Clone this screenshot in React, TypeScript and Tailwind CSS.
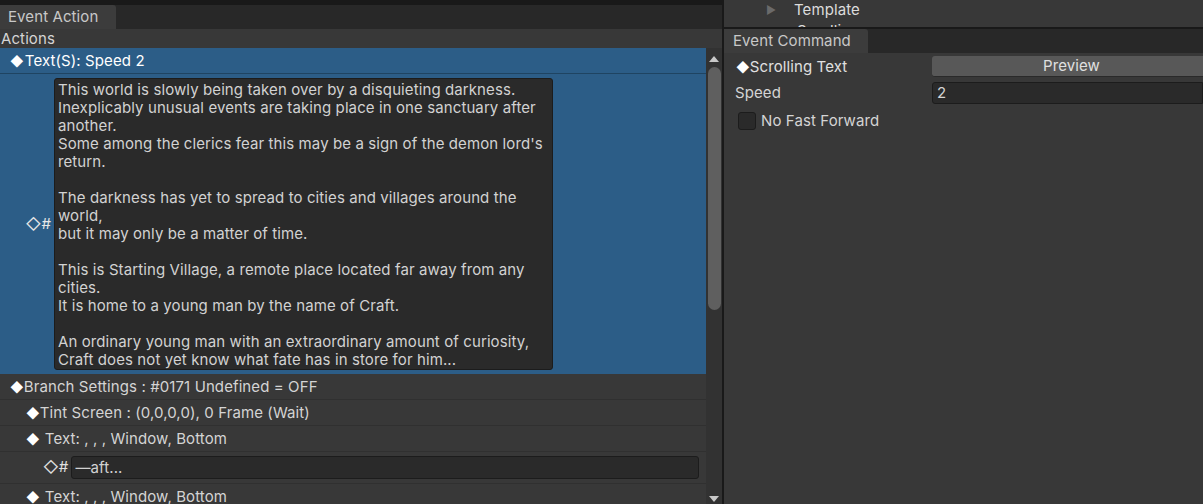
import React from "react";

const storyLines = [
  "This world is slowly being taken over by a disquieting darkness.",
  "Inexplicably unusual events are taking place in one sanctuary after",
  "another.",
  "Some among the clerics fear this may be a sign of the demon lord's",
  "return.",
  "",
  "The darkness has yet to spread to cities and villages around the",
  "world,",
  "but it may only be a matter of time.",
  "",
  "This is Starting Village, a remote place located far away from any",
  "cities.",
  "It is home to a young man by the name of Craft.",
  "",
  "An ordinary young man with an extraordinary amount of curiosity,",
  "Craft does not yet know what fate has in store for him...",
];

const font = { fontFamily: "Inter, 'DejaVu Sans', sans-serif" };

function Row({ children, className }: { children: React.ReactNode; className: string }) {
  return (
    <div className={`flex border-b border-[#303030] bg-[#383838] text-[#d4d4d4] ${className}`}>
      {children}
    </div>
  );
}

export default function App() {
  return (
    <div className="w-[1203px] h-[504px] flex bg-[#191919] overflow-hidden text-[15px] leading-[18px] tracking-[0.1px]" style={font}>
      {/* Left panel */}
      <div className="w-[722px] h-full flex flex-col">
        <div className="h-[5px] bg-[#191919]" />
        <div className="h-[24px] flex bg-[#282828]">
          <div className="w-[116px] bg-[#3c3c3c] rounded-tr-[3px] text-[#c8c8c8] pl-[8px] flex items-center">Event Action</div>
        </div>
        <div className="h-[19px] bg-[#383838] text-[#d4d4d4] flex items-center pl-[1px]">Actions</div>
        <div className="flex flex-1 min-h-0">
          <div className="w-[706px] flex flex-col">
            <div className="h-[26px] shrink-0 bg-[#2c5d87] border-b border-[#1f4462] text-white flex items-center pl-[10px]">
              <span className="text-[13px] mr-[1px]">◆</span>Text(S): Speed 2
            </div>
            <div className="h-[300px] shrink-0 bg-[#2c5d87] flex items-center">
              <div className="w-[54px] text-[#e6e6e6] flex justify-end pr-[3px]">
                <span>◇#</span>
              </div>
              <div className="w-[499px] h-[292px] bg-[#2a2a2a] border border-[#1c1c1c] rounded-[3px] px-[3px] pt-[2px] text-[#d2d2d2] whitespace-pre overflow-hidden">
                {storyLines.map((l, i) => (
                  <div key={i} className="h-[18px]">{l}</div>
                ))}
              </div>
            </div>
            <Row className="h-[26px] shrink-0 items-center pl-[10px]">
              <span className="text-[13px] text-white">◆</span>Branch Settings : #0171 Undefined = OFF
            </Row>
            <Row className="h-[26px] shrink-0 items-center pl-[26px]">
              <span className="text-[13px] text-white">◆</span>Tint Screen : (0,0,0,0), 0 Frame (Wait)
            </Row>
            <Row className="h-[26px] shrink-0 items-center pl-[26px]">
              <span className="text-[13px] text-white mr-[5px]">◆</span>Text: , , , Window, Bottom
            </Row>
            <Row className="h-[32px] shrink-0 items-start pt-[4px] pl-[43px]">
              <span className="text-[#e0e0e0] mr-[3px] mt-[2px]">◇#</span>
              <div className="w-[628px] h-[23px] bg-[#2a2a2a] border border-[#1c1c1c] rounded-[3px] flex items-center px-[3px] text-[#d2d2d2]">—aft...</div>
            </Row>
            <Row className="h-[26px] shrink-0 items-center pl-[26px]">
              <span className="text-[13px] text-white mr-[5px]">◆</span>Text: , , , Window, Bottom
            </Row>
          </div>
          {/* Scrollbar */}
          <div className="w-[16px] bg-[#323232] flex flex-col items-center">
            <div className="mt-[8px] w-0 h-0 border-l-[5px] border-r-[5px] border-b-[6px] border-l-transparent border-r-transparent border-b-[#c8c8c8]" />
            <div className="mt-[5px] w-[13px] h-[243px] bg-[#5f5f5f] rounded-[7px] ml-[1px]" />
            <div className="flex-1" />
            <div className="mb-[2px] w-0 h-0 border-l-[5px] border-r-[5px] border-t-[6px] border-l-transparent border-r-transparent border-t-[#c8c8c8]" />
          </div>
        </div>
      </div>
      {/* Divider */}
      <div className="w-[2px] bg-[#191919]" />
      {/* Right panel */}
      <div className="flex-1 flex flex-col">
        <div className="h-[27px] bg-[#383838] overflow-hidden">
          <div className="h-[20px] flex items-center pl-[42px] text-[#dcdcdc]">
            <span className="text-[#6a6a6a] text-[11px] w-[28px]">▶</span>Template
          </div>
          <div className="h-[22px] flex items-center pl-[73px] text-[#dcdcdc]">Scrolling</div>
        </div>
        <div className="h-[2px] bg-[#191919]" />
        <div className="h-[24px] flex bg-[#282828]">
          <div className="w-[144px] bg-[#3c3c3c] rounded-tr-[3px] text-[#c8c8c8] pl-[9px] flex items-center">Event Command</div>
        </div>
        <div className="flex-1 bg-[#383838] pt-[3px] text-[#d4d4d4]">
          <div className="flex items-center h-[21px]">
            <div className="w-[208px] pl-[12px] flex items-center text-[#e0e0e0]">
              <span className="text-[13px] text-white">◆</span>Scrolling Text
            </div>
            <div className="flex-1 h-[21px] bg-[#585858] rounded-l-[3px] border-b border-[#2a2a2a] flex items-center justify-center pl-[8px] text-[#e0e0e0]">Preview</div>
          </div>
          <div className="flex items-center h-[22px] mt-[5px]">
            <div className="w-[208px] pl-[11px]">Speed</div>
            <div className="flex-1 h-[22px] bg-[#2a2a2a] border border-[#1c1c1c] rounded-l-[3px] flex items-center pl-[4px]">2</div>
          </div>
          <div className="flex items-center h-[18px] mt-[8px] pl-[14px]">
            <div className="w-[18px] h-[18px] bg-[#2a2a2a] border border-[#1c1c1c] rounded-[3px] mr-[5px]" />
            <span>No Fast Forward</span>
          </div>
        </div>
      </div>
    </div>
  );
}
